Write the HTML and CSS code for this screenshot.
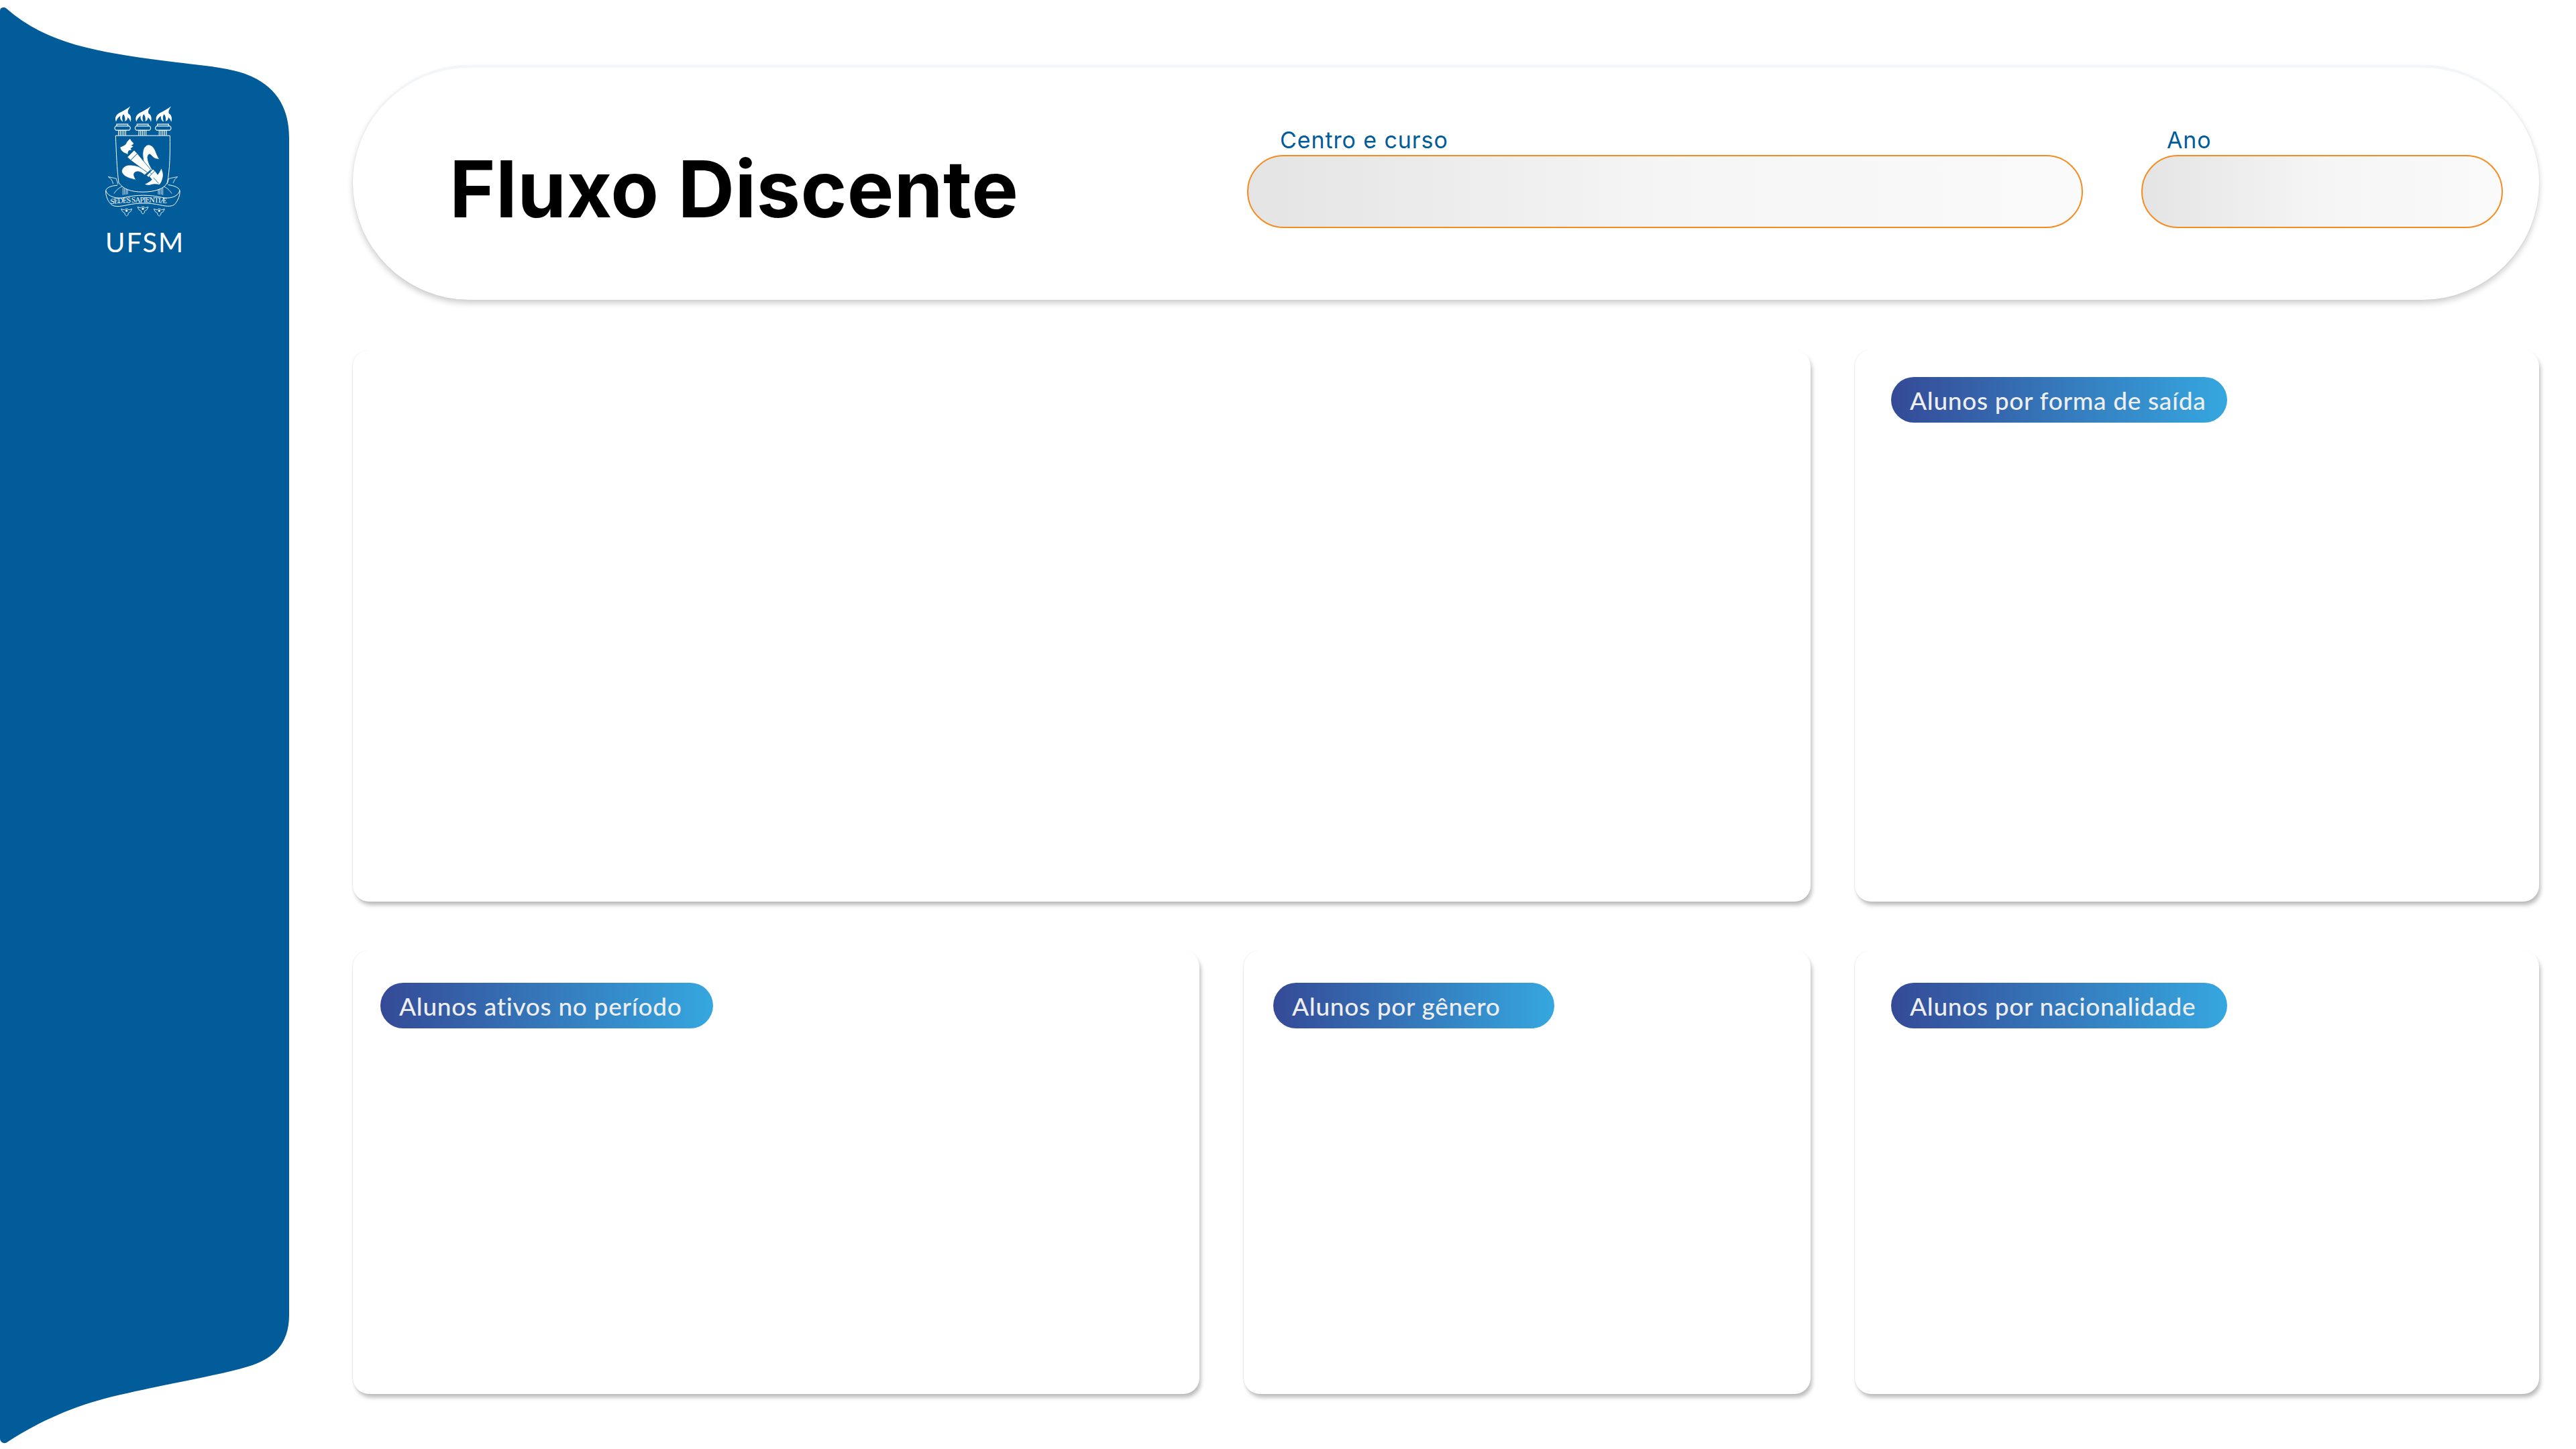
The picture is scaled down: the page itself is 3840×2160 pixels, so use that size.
FILE: index.html
```html
<!DOCTYPE html>
<html lang="pt-BR">
<head>
<meta charset="utf-8">
<title>Fluxo Discente</title>
<link rel="stylesheet" href="styles.css">
</head>
<body>
<div class="app">
  <aside class="sidebar">
    <svg class="crest" viewBox="0 0 540 560" role="img" aria-label="Brasão UFSM">
      <defs>
        <g id="torch">
          <path class="fill" d="M159 124C151 105 160 92 174 84C190 76 205 68 223 55C212 72 210 80 214 88C224 92 229 106 224 125C220 114 216 108 210 104C212 112 206 120 198 122C202 110 198 98 192 90C184 100 186 112 190 124C180 120 176 110 178 98C168 104 162 114 159 124Z"/>
          <path class="line solid" d="M162 135H212V143H162ZM158 143H218Q228 152 218 162H158Q148 152 158 143ZM168 163H206M170 164V185M178 164V185M186 164V185M194 164V185M202 164V185"/>
        </g>
        <g id="head">
          <path class="line" d="M182 514L196 518Q206 508 216 518L230 514L224 526L214 532Q216 540 206 546Q196 540 198 532L188 526Z"/>
          <circle class="fill" cx="206" cy="522" r="5"/>
        </g>
        <path id="arc" d="M134 492Q280 476 422 492"/>
      </defs>
      <use href="#torch"/>
      <use href="#torch" x="91"/>
      <use href="#torch" x="182"/>
      <path class="line heavy" d="M157 186H400C401 260 400 340 388 396C375 425 330 438 279 438C225 438 190 425 171 396C163 340 160 260 157 186Z"/>
      <path class="fill" d="M222 200C226 214 238 216 237 224L226 230L236 234L224 243L228 250L216 252C212 258 210 264 212 270C204 264 196 264 190 258C184 254 178 246 178 238C192 232 200 228 204 222C208 212 214 208 222 200Z"/>
      <path class="fill cut" d="M298 345C278 305 270 250 290 234C305 218 325 232 334 252C340 268 346 282 353 291C340 292 328 288 318 276C308 262 300 272 300 286C302 305 312 325 322 340Z"/>
      <path class="fill cut" d="M300 352C270 322 240 316 212 318C192 322 180 340 186 352C196 372 222 378 248 384C240 370 234 358 244 350C258 342 274 350 286 362Z"/>
      <path class="fill cut" d="M254 266L314 338L300 352L224 296Z"/>
      <path class="fill cut" d="M240 251L254 266L224 296L209 282Z"/>
      <path class="fill" d="M288 403C300 398 312 392 320 382L308 368L332 344L345 362C352 352 358 344 361 333C366 345 372 360 366 378C362 392 358 400 352 405C340 400 325 402 315 405C305 408 295 407 288 403Z"/>
      <path class="fill cut" d="M324 336L332 344L304 372L296 364Z"/>
      <path class="seam" d="M310 350L318 358M326 374L350 400"/>
      <path class="line" d="M124 370L160 378L168 404M434 370L395 378L388 402M124 370Q142 380 146 402M434 370Q420 380 414 398"/>
      <path class="line heavy" d="M165 408C138 410 116 418 113 432C112 458 124 480 136 492C148 506 176 504 210 496C255 486 310 486 355 496C390 504 412 504 424 490C436 474 446 454 444 432C440 418 420 410 392 406M113 432C124 462 165 470 200 462C250 450 310 450 362 462C395 470 435 462 444 432"/>
      <path class="line" d="M150 445C158 432 172 418 186 414M190 420V452M197 422V450M204 424V450M210 426V448M408 445C400 432 386 418 372 414M368 420V452M361 422V450M354 424V450M348 426V448"/>
      <text class="motto"><textPath href="#arc">SEDES SAPIENTIÆ</textPath></text>
      <use href="#head"/>
      <use href="#head" x="73" y="-9"/>
      <use href="#head" x="146"/>
    </svg>
    <span class="brand">UFSM</span>
  </aside>
  <main class="content">
    <header class="topbar">
      <h1 class="title">Fluxo Discente</h1>
      <div class="filters">
        <label class="field field-course">
          <span class="field-label">Centro e curso</span>
          <span class="field-input"></span>
        </label>
        <label class="field field-year">
          <span class="field-label">Ano</span>
          <span class="field-input"></span>
        </label>
      </div>
    </header>
    <section class="dashboard">
      <article class="card card-main"></article>
      <article class="card card-exit"><h2 class="badge badge-wide">Alunos por forma de saída</h2></article>
      <article class="card card-active"><h2 class="badge badge-mid">Alunos ativos no período</h2></article>
      <article class="card card-gender"><h2 class="badge badge-narrow">Alunos por gênero</h2></article>
      <article class="card card-nation"><h2 class="badge badge-wide">Alunos por nacionalidade</h2></article>
    </section>
  </main>
</div>
</body>
</html>
```
FILE: styles.css
```css
* { box-sizing: border-box; }
html, body { margin: 0; padding: 0; background: #fff; }
body { width: 3840px; height: 2160px; overflow: hidden; font-family: "Lato", "Noto Sans", sans-serif; }

.app { display: flex; width: 3840px; height: 2160px; }

.sidebar {
  flex: 0 0 431px;
  height: 2160px;
  background: #015c99;
  display: flex;
  flex-direction: column;
  align-items: flex-start;
  padding: 140px 0 0 120px;
  clip-path: path("M0 16Q0 11 6 11Q8 11 10 13C70 66 150 78 240 90C300 98 345 100 375 114C415 132 431 165 431 205V1960C431 2010 400 2028 370 2037C320 2052 250 2062 167 2082C110 2096 60 2118 12 2149Q7 2153 3 2150Q0 2148 0 2144Z");
}
.crest { width: 180px; height: 187px; display: block; }
.crest .fill { fill: #fff; }
.crest .cut { stroke: #015c99; stroke-width: 2.5; }
.crest .seam { fill: none; stroke: #015c99; stroke-width: 2.5; }
.crest .line { fill: none; stroke: #fff; stroke-width: 2.5; }
.crest .heavy { stroke-width: 3; }
.crest .solid { stroke-width: 3.5; }
.crest .motto { font-family: "Liberation Serif", serif; font-size: 34px; letter-spacing: -3px; fill: #fff; }
.brand {
  margin: 10px 0 0 37px;
  font-family: "Lato", sans-serif;
  font-size: 40px;
  line-height: 48px;
  font-weight: 400;
  color: #fff;
  letter-spacing: 2px;
}

.content { flex: 1; padding: 98px 55px 0 95px; }

.topbar {
  height: 349px;
  display: flex;
  align-items: flex-start;
  justify-content: space-between;
  padding: 0 54px 0 144px;
  border-radius: 178px;
  background: #fff;
  border-top: 3px solid #f3f7fa;
  box-shadow: 0 5px 10px rgba(0, 0, 0, .2), 0 0 2px rgba(0, 60, 100, .08);
}
.title {
  margin: 111px 0 0;
  font-family: "Inter", sans-serif;
  font-size: 117px;
  line-height: 140px;
  font-weight: 700;
  letter-spacing: .4px;
  color: #000;
}
.filters { display: flex; gap: 87px; margin-top: 92px; }
.field { display: flex; flex-direction: column; }
.field-label {
  font-family: "Inter", sans-serif;
  font-size: 34px;
  line-height: 32px;
  height: 38px;
  letter-spacing: .9px;
  color: #015c99;
}
.field-course { width: 1246px; }
.field-course .field-label { padding-left: 49px; }
.field-year { width: 539px; }
.field-year .field-label { padding-left: 38px; }
.field-input {
  height: 109px;
  border: 2px solid #f68b1f;
  border-radius: 55px;
  background: linear-gradient(90deg, #e4e4e4, #f5f5f5 50%, #fafafa);
}

.dashboard {
  display: grid;
  grid-template-columns: 1262px 845px 1020px;
  grid-template-rows: 822px 661px;
  column-gap: 66px;
  row-gap: 73px;
  margin-top: 75px;
}
.card {
  background: #fff;
  border-radius: 24px;
  box-shadow: 3px 6px 6px -1px rgba(0, 0, 0, .28), -1px 0 2px rgba(0, 0, 0, .07);
  clip-path: inset(0 -20px -20px -20px);
  padding: 48px 0 0 41px;
}
.card-main { grid-column: span 2; }
.card-exit { padding: 40px 0 0 54px; }
.card-gender { padding-left: 44px; }
.card-nation { padding-left: 54px; }

.badge {
  margin: 0;
  height: 68px;
  display: flex;
  align-items: center;
  padding-left: 28px;
  border-radius: 34px;
  background: linear-gradient(90deg, #354a97, #35a7df);
  color: #eee;
  font-family: "Lato", sans-serif;
  font-size: 37px;
  font-weight: 500;
  letter-spacing: .7px;
  white-space: nowrap;
}
.badge-wide { width: 501px; }
.badge-mid { width: 496px; }
.badge-narrow { width: 419px; }
```
